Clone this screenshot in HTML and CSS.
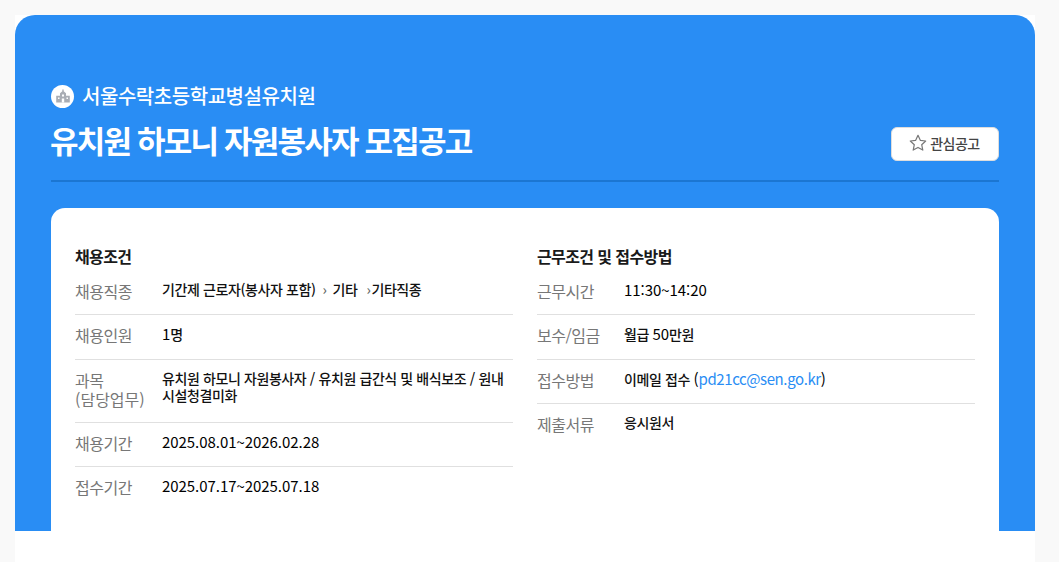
FILE: index.html
```html
<!DOCTYPE html>
<html lang="ko">
<head>
<meta charset="utf-8">
<title>유치원 하모니 자원봉사자 모집공고</title>
<link rel="stylesheet" href="styles.css">
</head>
<body>
<main class="page">
  <section class="hero">
    <div class="org">
      <span class="org-icon">
        <svg width="18" height="18" viewBox="0 0 18 18" fill="#a9adb4">
          <path d="M8.300 2.500h1.400v1.700L12 6.300v2.500h3.800v6.700H2.200V8.800H6V6.300l2.300-2.100z"/>
          <path fill="#fff" d="M8 7.500h2v2H8zM4 10.500h1.500V12H4zM12.500 10.500H14V12h-1.500zM7.800 11.500h2.400v4H7.800z"/>
        </svg>
      </span>
      <span class="org-name">서울수락초등학교병설유치원</span>
    </div>
    <div class="title-row">
      <h1 class="title">유치원 하모니 자원봉사자 모집공고</h1>
      <button class="fav" type="button">
        <svg width="18" height="18" viewBox="0 0 18 18" fill="none" stroke="#777" stroke-width="1.200" stroke-linejoin="round">
          <path d="M9 1.300l2.300 5 5.400.7-4 3.700 1.100 5.400L9 13.400l-4.800 2.700 1.100-5.400-4-3.700 5.400-.7z"/>
        </svg>
        <span>관심공고</span>
      </button>
    </div>
    <div class="card">
      <div class="col">
        <h2 class="col-title">채용조건</h2>
        <dl class="rows">
          <div class="row"><dt>채용직종</dt><dd>기간제 근로자(봉사자 포함)<span class="sep">›</span>기타<span class="sep sep-wide">›</span>기타직종</dd></div>
          <div class="row"><dt>채용인원</dt><dd><span class="latin">1</span>명</dd></div>
          <div class="row"><dt>과목<br><span class="dt-long">(담당업무)</span></dt><dd>유치원 하모니 자원봉사자 / 유치원 급간식 및 배식보조 / 원내 시설청결미화</dd></div>
          <div class="row"><dt>채용기간</dt><dd><span class="latin">2025.08.01~2026.02.28</span></dd></div>
          <div class="row"><dt>접수기간</dt><dd><span class="latin">2025.07.17~2025.07.18</span></dd></div>
        </dl>
      </div>
      <div class="col">
        <h2 class="col-title">근무조건 및 접수방법</h2>
        <dl class="rows">
          <div class="row"><dt>근무시간</dt><dd><span class="latin">11:30~14:20</span></dd></div>
          <div class="row"><dt>보수/임금</dt><dd>월급 <span class="latin">50</span>만원</dd></div>
          <div class="row"><dt>접수방법</dt><dd>이메일 접수 <span class="latin">(<a href="#">pd21cc@sen.go.kr</a>)</span></dd></div>
          <div class="row"><dt>제출서류</dt><dd>응시원서</dd></div>
        </dl>
      </div>
    </div>
  </section>
</main>
</body>
</html>
```

FILE: styles.css
```css
* { box-sizing: border-box; }
html, body { margin: 0; height: 100%; overflow: hidden; }
body {
  background: #f9f9f9;
  font-family: "Noto Sans CJK KR", "Noto Sans", sans-serif;
  color: #111;
}
.page { width: 1020px; height: 562px; margin: 0 0 0 15px; padding-top: 15px; background: linear-gradient(#f9f9f9 15px, #fff 15px); }
.hero {
  height: 516px;
  background: #298df4;
  border-radius: 20px 20px 0 0;
  padding: 67px 36px 0;
  overflow: hidden;
}
.org { display: flex; align-items: center; gap: 8px; height: 28px; }
.org-icon {
  width: 23px; height: 23px; border-radius: 50%; background: #fff;
  display: flex; align-items: center; justify-content: center;
}
.org-name { color: #fff; font-size: 20px; font-weight: 500; letter-spacing: -0.45px; line-height: 28px; }
.title-row {
  display: flex; justify-content: space-between; align-items: flex-start;
  height: 65px; margin-top: 7px;
  border-bottom: 2px solid #1b76d2;
}
.title { margin: 2px 0 0 -1px; color: #fff; font-size: 31px; font-weight: 700; letter-spacing: -1.8px; line-height: 42px; }
.fav {
  width: 108px; height: 34px; margin-top: 10px; padding: 0 1px 2px 0;
  display: flex; align-items: center; justify-content: center; gap: 3px;
  background: #fff; border: 1px solid #ddd; border-radius: 6px;
  font: 500 14px "Noto Sans CJK KR", sans-serif; letter-spacing: -0.5px; color: #444;
}
.card {
  margin-top: 26px; height: 400px;
  background: #fff; border-radius: 14px 14px 0 0;
  padding: 36px 24px 0;
  display: grid; grid-template-columns: 438px 438px; column-gap: 24px;
}
.col-title { margin: 0; font-size: 16px; font-weight: 700; letter-spacing: -0.6px; line-height: 24px; color: #1a1a1a; }
.rows { margin: 3px 0 0; }
.row {
  display: flex; padding: 11px 0 13.300px;
  border-bottom: 1px solid #e0e0e0;
}
.row:last-child { border-bottom: 0; }
dt { width: 87px; flex: none; font-size: 16px; line-height: 19px; color: #777; letter-spacing: -0.5px; font-weight: 400; }
.dt-long { letter-spacing: 0; }
dd { margin: -1px 0 0; flex: 1; font-size: 14px; line-height: 17px; color: #111; letter-spacing: -0.4px; font-weight: 500; }
.latin { font-size: 15px; letter-spacing: -0.05px; font-weight: 400; color: #000; }
.sep { color: #666; margin: 0 6px 0 7px; }
.sep-wide { margin: 0 1px 0 9px; }
a { color: #298df4; text-decoration: none; font-weight: 400; letter-spacing: -0.4px; }
```
